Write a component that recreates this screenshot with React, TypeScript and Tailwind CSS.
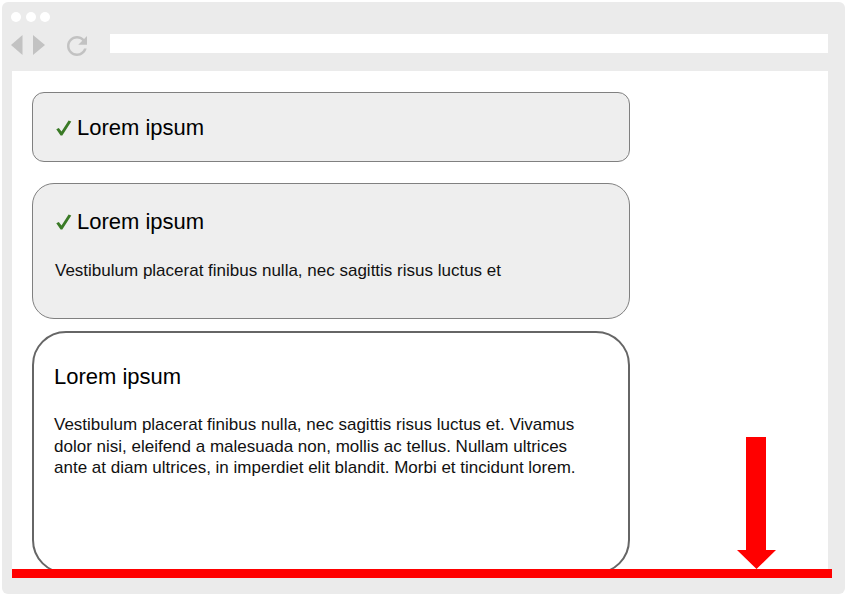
const FONT = "font-['Liberation_Sans',Arial,sans-serif]";

function Check() {
  return (
    <svg width="16" height="16" viewBox="0 0 16 16" className="inline-block">
      <polygon points="0.3,9.2 2.8,7.9 5.5,11.4 12.6,0.4 15.3,1.6 6.3,15.6 4.6,15.6" fill="#3a7a26" />
    </svg>
  );
}

function Title({ check }: { check?: boolean }) {
  return (
    <div className="flex items-center h-[25px] text-[22px] leading-[25px] text-black">
      {check && (
        <span className="w-[22px] ml-[1px] -mr-[1px] flex items-center">
          <Check />
        </span>
      )}
      <span>Lorem ipsum</span>
    </div>
  );
}

export default function App() {
  return (
    <div className={`relative w-[848px] h-[596px] bg-white pt-[2px] pl-[2px] ${FONT}`}>
      <div className="w-[843px] h-[592px] bg-[#ebebeb] rounded-[6px] flex flex-col">
        {/* window dots */}
        <div className="flex gap-[4.5px] ml-[9px] mt-[10px] h-[10px]">
          <div className="w-[10px] h-[10px] rounded-full bg-white" />
          <div className="w-[10px] h-[10px] rounded-full bg-white" />
          <div className="w-[10px] h-[10px] rounded-full bg-white" />
        </div>

        {/* toolbar */}
        <div className="flex items-start h-[22px] mt-[11px] ml-[9px]">
          <svg width="34" height="22" viewBox="0 0 34 22">
            <polygon points="0,12 11.5,2 11.5,22" fill="#c2c2c2" />
            <polygon points="22,2 34,12 22,22" fill="#c2c2c2" />
          </svg>
          <svg width="20" height="20" viewBox="4 4 16 16" className="ml-[22px] mt-[3px]">
            <path
              fill="#c2c2c2"
              d="M17.65 6.35C16.2 4.9 14.21 4 12 4c-4.42 0-7.99 3.58-7.99 8s3.57 8 7.99 8c3.73 0 6.84-2.55 7.730-6h-2.08c-.82 2.33-3.04 4-5.65 4-3.31 0-6-2.69-6-6s2.690-6 6-6c1.66 0 3.14.69 4.220 1.78L13 11h7V4l-2.35 2.35z"
            />
          </svg>
          <div className="ml-[23px] mt-[1px] w-[718px] h-[19px] bg-white" />
        </div>

        {/* page content */}
        <div className="ml-[10px] mt-[16px] w-[816px] h-[507px] bg-white pl-[20px] pt-[21px] overflow-hidden">
          <div className="w-[598px] h-[70px] bg-[#eeeeee] border border-[#808080] rounded-[12px] pl-[22px] pt-[22px]">
            <Title check />
          </div>

          <div className="mt-[21px] w-[598px] h-[136px] bg-[#eeeeee] border border-[#808080] rounded-[22px] pl-[22px] pt-[25px]">
            <Title check />
            <p className="mt-[26px] text-[17px] leading-[21.5px] text-[#111]">
              Vestibulum placerat finibus nulla, nec sagittis risus luctus et
            </p>
          </div>

          <div className="mt-[12px] w-[598px] h-[243px] bg-white border-2 border-[#666] rounded-[34px] pl-[20px] pt-[31px]">
            <Title />
            <p className="mt-[25px] w-[545px] text-[17px] leading-[21.5px] text-[#111]">
              Vestibulum placerat finibus nulla, nec sagittis risus luctus et. Vivamus dolor nisi, eleifend a
              malesuada non, mollis ac tellus. Nullam ultrices ante at diam ultrices, in imperdiet elit blandit.
              Morbi et tincidunt lorem.
            </p>
          </div>
        </div>
      </div>

      {/* annotation: fold line and arrow */}
      <div className="absolute left-[12px] top-[569px] w-[820px] h-[9px] bg-[#ff0000]" />
      <svg className="absolute left-[737px] top-[437px]" width="39" height="132" viewBox="0 0 39 132">
        <polygon points="9,0 29,0 29,113 39,113 19.5,132 0,113 9,113" fill="#ff0000" />
      </svg>
    </div>
  );
}
